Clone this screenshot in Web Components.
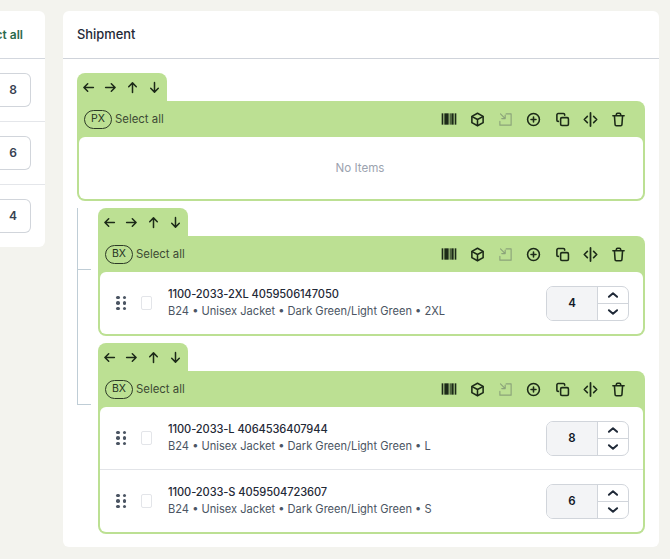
<!DOCTYPE html>
<html lang="en">
<head>
<meta charset="utf-8">
<title>Shipment</title>
<style>
html,body{margin:0;padding:0;background:#f3f3ee;font-family:Inter,"Liberation Sans",sans-serif;}
</style>
</head>
<body>
<ship-page>
  <side-panel slot="side">
    <side-row value="8"></side-row>
    <side-row value="6"></side-row>
    <side-row value="4" last></side-row>
  </side-panel>
  <shipment-card slot="main">
    <pack-box label="PX">
      <empty-note>No Items</empty-note>
    </pack-box>
    <pack-tree>
      <pack-box label="BX" branch="first">
        <item-row sku="1100-2033-2XL 4059506147050" desc="B24 • Unisex Jacket • Dark Green/Light Green • 2XL" qty="4"></item-row>
      </pack-box>
      <pack-box label="BX" branch="next">
        <item-row sku="1100-2033-L 4064536407944" desc="B24 • Unisex Jacket • Dark Green/Light Green • L" qty="8" divider></item-row>
        <item-row sku="1100-2033-S 4059504723607" desc="B24 • Unisex Jacket • Dark Green/Light Green • S" qty="6"></item-row>
      </pack-box>
    </pack-tree>
  </shipment-card>
</ship-page>
<script>
const svg=(w,inner)=>`<svg width="${w}" height="${w}" viewBox="0 0 24 24" fill="none" stroke="currentColor" stroke-width="2.500" stroke-linecap="round" stroke-linejoin="round">${inner}</svg>`;
const ICONS={
  left:'<path d="M21 12H3.500M10.500 5l-7 7 7 7" stroke-width="2.800"/>',
  right:'<path d="M3 12h17.500M13.500 5l7 7-7 7" stroke-width="2.800"/>',
  up:'<path d="M12 21V3.500M5 10.500l7-7 7 7" stroke-width="2.800"/>',
  down:'<path d="M12 3v17.500M5 13.500l7 7 7-7" stroke-width="2.800"/>',
  barcode:'<g stroke="none" fill="currentColor"><rect x="1" y="3.500" width="2.500" height="17"/><rect x="5" y="3.500" width="6.500" height="17"/><rect x="13" y="3.500" width="1.500" height="17"/><rect x="15.500" y="3.500" width="3.500" height="17"/><rect x="20.500" y="3.500" width="2.500" height="17"/></g>',
  cube:'<path d="M12 2l9 5v10l-9 5-9-5V7z"/><path d="M12 12l8.500-4.700M12 12v9.500M12 12L3.500 7.300"/>',
  importIcon:'<path d="M13 3h8v18H3v-6" stroke-width="1.800"/><path d="M4 3l7.500 7.500M11.500 5v5.500H6" stroke-width="1.800"/>',
  plus:'<circle cx="12" cy="12" r="9.500"/><path d="M8 12h8M12 8v8"/>',
  copy:'<rect x="9" y="9" width="12.500" height="12.500" rx="2"/><path d="M15.500 5V4.500a2 2 0 0 0-2-2H5a2 2 0 0 0-2 2V13a2 2 0 0 0 2 2h.500"/>',
  split:'<path d="M12 1.500v21" stroke-width="2.800"/><path d="M7 7l-5 5 5 5M17 7l5 5-5 5"/>',
  trash:'<path d="M3 6h18M8.500 6V4a2 2 0 0 1 2-2h3a2 2 0 0 1 2 2v2M5.500 6l1 14a2 2 0 0 0 2 2h7a2 2 0 0 0 2-2l1-14"/>',
  chevUp:'<path d="M5 15L12 9l7 6" stroke-width="3.400"/>',
  chevDown:'<path d="M5 9l7 6 7-6" stroke-width="3.400"/>'
};
class Base extends HTMLElement{
  constructor(){super();this.attachShadow({mode:'open'});}
  connectedCallback(){this.shadowRoot.innerHTML=this.render();}
}
customElements.define('ship-page',class extends Base{render(){return `<style>
:host{display:flex;width:670px;height:559px;box-sizing:border-box;padding:11px 11px 12px 0;gap:18px;overflow:hidden;align-items:flex-start}
</style><slot name="side"></slot><slot name="main"></slot>`}});
customElements.define('side-panel',class extends Base{render(){return `<style>
:host{display:block;width:45px;height:236px;flex:none;background:#fff;border-radius:0 6px 6px 0;overflow:hidden}
.head{height:48px;box-sizing:border-box;display:flex;align-items:center;justify-content:flex-end;padding-right:22px;border-bottom:1px solid #d3d7de;overflow:hidden;white-space:nowrap;font:600 12px/16px Inter,"Liberation Sans",sans-serif;color:#2a6a4c}
</style><div class="head"><span>Select all</span></div><slot></slot>`}});
customElements.define('side-row',class extends Base{render(){return `<style>
:host{display:flex;align-items:center;height:${this.hasAttribute('last')?'62px':'63px'};box-sizing:border-box;border-bottom:${this.hasAttribute('last')?'0':'1px solid #e4e6ea'}}
.box{width:31px;height:34px;box-sizing:border-box;border:1px solid #d1d5db;border-left:0;border-radius:0 6px 6px 0;display:flex;align-items:center;justify-content:flex-end;padding-right:13px;font:600 12px/16px Inter,"Liberation Sans",sans-serif;color:#374151}
</style><div class="box">${this.getAttribute('value')}</div>`}});
customElements.define('shipment-card',class extends Base{render(){return `<style>
:host{display:block;width:596px;height:536px;flex:none;background:#fff;border-radius:6px;overflow:hidden}
.head{height:48px;box-sizing:border-box;display:flex;align-items:center;padding-left:14px;border-bottom:1px solid #cfd3da;font:500 12.900px/18px Inter,"Liberation Sans",sans-serif;color:#1f2937}
.body{padding:14px 14px 13px;display:flex;flex-direction:column;gap:7px}
</style><div class="head">Shipment</div><div class="body"><slot></slot></div>`}});
customElements.define('pack-tree',class extends Base{render(){return `<style>
:host{display:flex;flex-direction:column;gap:7px;padding-left:21px}
</style><slot></slot>`}});
customElements.define('icon-btn',class extends Base{render(){
  const n=this.getAttribute('name'),s=this.getAttribute('size')||15;
  return `<style>:host{display:flex;align-items:center;justify-content:center;color:${this.getAttribute('color')||'#1c2a18'}}svg{display:block}</style>${svg(s,ICONS[n])}`}});
customElements.define('pack-box',class extends Base{render(){
  const b=this.getAttribute('branch');
  const line=b?`:host::before{content:"";position:absolute;left:-21px;top:${b==='first'?'0':'-73px'};width:13px;height:${b==='first'?'61px':'134px'};border-left:1.500px solid #bfcdd6;border-bottom:1.500px solid #bfcdd6}`:'';
  return `<style>
:host{display:block;position:relative}
${line}
.tab{width:90px;height:28px;box-sizing:border-box;background:#bce093;border-radius:8px 8px 0 0;display:flex;align-items:center}
.tab icon-btn{width:22px}
.head{height:36px;box-sizing:border-box;background:#bce093;border-radius:0 8px 0 0;display:flex;align-items:center;padding:0 12.500px 0 7px}
.pill{box-sizing:border-box;width:28px;height:19px;border:1px solid #2c3a26;border-radius:10px;display:flex;align-items:center;justify-content:center;font:400 10.500px/12px Inter,"Liberation Sans",sans-serif;color:#26331f}
.sel{margin-left:3px;font:400 11.400px/16px Inter,"Liberation Sans",sans-serif;color:#3d4a33}
.tools{margin-left:auto;display:flex;align-items:center}
.tools icon-btn{width:28.200px}
.wrap{background:#bce093;padding:0 2px 2px;border-radius:0 0 8px 8px}
.inner{background:#fff;border-radius:6px;overflow:hidden}
</style>
<div class="tab">
  <icon-btn name="left" size="13"></icon-btn><icon-btn name="right" size="13"></icon-btn><icon-btn name="up" size="13"></icon-btn><icon-btn name="down" size="13"></icon-btn>
</div>
<div class="head">
  <span class="pill">${this.getAttribute('label')}</span><span class="sel">Select all</span>
  <div class="tools">
    <icon-btn name="barcode" size="16"></icon-btn><icon-btn name="cube"></icon-btn><icon-btn name="importIcon" color="#8ba37a"></icon-btn><icon-btn name="plus"></icon-btn><icon-btn name="copy"></icon-btn><icon-btn name="split"></icon-btn><icon-btn name="trash"></icon-btn>
  </div>
</div>
<div class="wrap"><div class="inner"><slot></slot></div></div>`}});
customElements.define('empty-note',class extends Base{render(){return `<style>
:host{display:flex;align-items:center;justify-content:center;height:62px;padding-right:2px;font:400 11.600px/16px Inter,"Liberation Sans",sans-serif;color:#9ca3af}
</style><slot></slot>`}});
customElements.define('grip-dots',class extends Base{render(){return `<style>
:host{display:grid;grid-template-columns:3.500px 3.500px;gap:2.200px 3px;width:10px;margin-left:1px}
i{width:3.500px;height:3.500px;border-radius:50%;background:#4b5563}
</style>${'<i></i>'.repeat(6)}`}});
customElements.define('qty-stepper',class extends Base{render(){return `<style>
:host{display:flex;width:83px;height:35px;box-sizing:border-box;border:1px solid #d1d5db;border-radius:7px;overflow:hidden;background:#fff;flex:none}
.v{width:51px;box-sizing:border-box;background:#f3f4f6;border-right:1px solid #d1d5db;display:flex;align-items:center;justify-content:center;font:600 11.500px/16px Inter,"Liberation Sans",sans-serif;color:#111827}
.b{flex:1;display:flex;flex-direction:column}
.b icon-btn{flex:1}
.b icon-btn:first-child{border-bottom:1px solid #d1d5db}
</style><div class="v">${this.getAttribute('value')}</div><div class="b"><icon-btn name="chevUp" size="14" color="#1f2937"></icon-btn><icon-btn name="chevDown" size="14" color="#1f2937"></icon-btn></div>`}});
customElements.define('item-row',class extends Base{render(){return `<style>
:host{display:flex;align-items:center;height:${this.hasAttribute('divider')?'63px':'62px'};box-sizing:border-box;padding:0 14px 0 15px;${this.hasAttribute('divider')?'border-bottom:1px solid #e2e4e8;':''}}
.cb{width:11px;height:14px;box-sizing:border-box;border:1px solid #e3e5e9;border-radius:2px;margin-left:15px;background:#fff}
.txt{margin-left:16px;flex:1;min-width:0}
.sku{font:500 11.100px/17px Inter,"Liberation Sans",sans-serif;color:#1f2937;letter-spacing:-.1px}
.desc{font:400 11.100px/17px Inter,"Liberation Sans",sans-serif;color:#4b5563}
</style><grip-dots></grip-dots><div class="cb"></div><div class="txt"><div class="sku">${this.getAttribute('sku')}</div><div class="desc">${this.getAttribute('desc')}</div></div><qty-stepper value="${this.getAttribute('qty')}"></qty-stepper>`}});
</script>
</body>
</html>
